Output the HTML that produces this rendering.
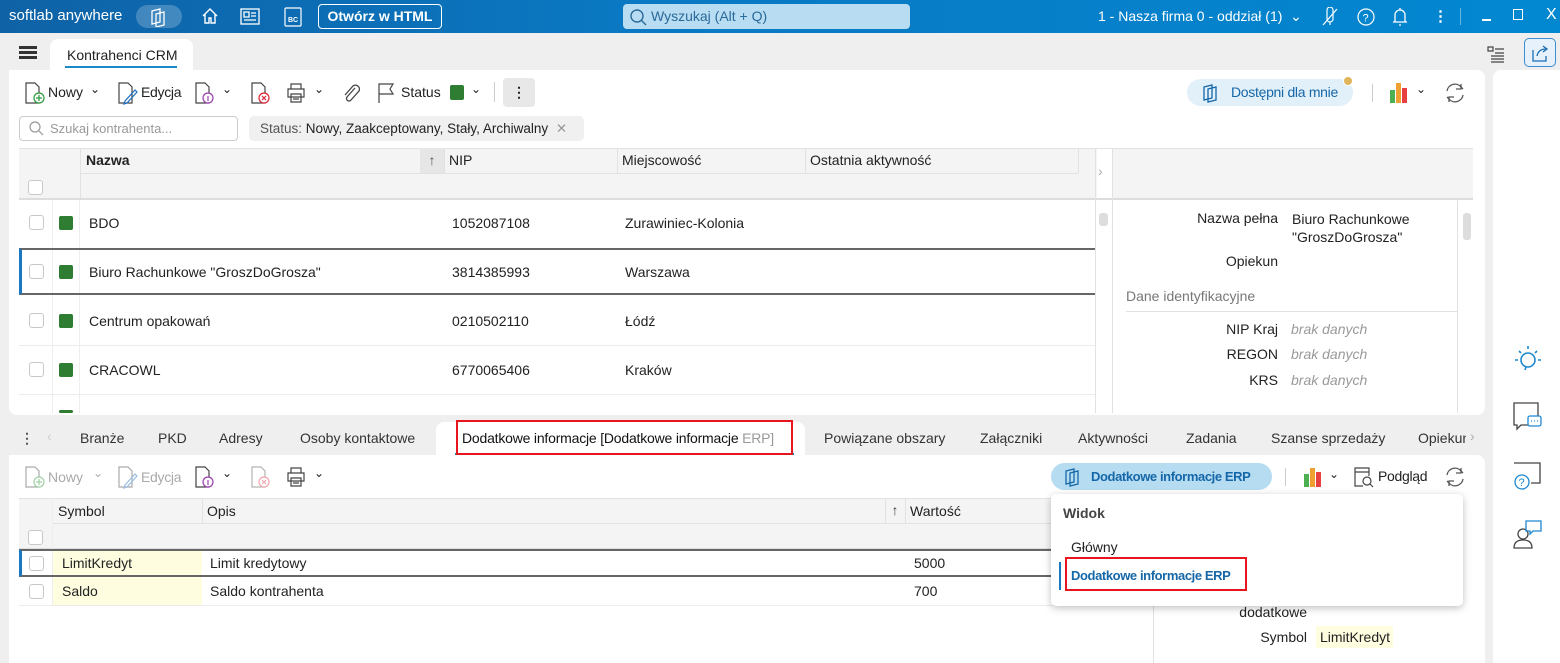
<!DOCTYPE html>
<html><head><meta charset="utf-8"><style>
*{box-sizing:border-box;margin:0;padding:0}
body{width:1560px;height:663px;overflow:hidden;background:#efefef;font-family:"Liberation Sans",sans-serif;font-size:14px;color:#222;position:relative}
.a{position:absolute}
.top{left:0;top:0;width:1560px;height:33px;background:linear-gradient(90deg,#0f62a6,#0a78c2 40%,#0288d1);color:#fff}
.top .t{position:absolute;top:7px;font-size:15px;white-space:nowrap}
.cb{position:absolute;width:15px;height:15px;border:1px solid #c8c8c8;border-radius:3px;background:#fff}
.sq{position:absolute;width:14px;height:14px;background:#2e7d32;border-radius:2px}
.txt{position:absolute;white-space:nowrap}
.hdr{background:#f4f4f4}
.vl{position:absolute;width:1px;background:#e2e2e2}
.hl{position:absolute;height:1px;background:#e2e2e2}
.lbl{position:absolute;right:0;text-align:right;white-space:nowrap}
</style></head><body>
<div class="a top">
 <div class="t" style="left:9px">softlab anywhere</div>
 <div class="a" style="left:136px;top:5px;width:46px;height:23px;border-radius:12px;background:rgba(255,255,255,.22)"></div>
 <svg class="a" style="left:148px;top:7px" width="22" height="20" fill="none" stroke="#fff" stroke-width="1.3"><path d="M4 4l8-2v13l-8 2z M8 7l8-2v13l-8 2z"/></svg>
 <svg class="a" style="left:201px;top:7px" width="18" height="18" fill="none" stroke="#fff" stroke-width="1.4"><path d="M2 9l7-7 7 7M4 7v9h4v-5h2v5h4V7"/></svg>
 <svg class="a" style="left:240px;top:8px" width="20" height="17" fill="none" stroke="#fff" stroke-width="1.3"><rect x="1" y="1" width="18" height="15"/><path d="M4 4h5v5H4zM11 5h5M11 8h5M4 12h12"/></svg>
 <svg class="a" style="left:283px;top:7px" width="20" height="20" fill="none" stroke="#fff" stroke-width="1.2"><rect x="2" y="1" width="16" height="18" rx="1"/><text x="5" y="15" font-size="7" fill="#fff" stroke="none" font-family="Liberation Sans" font-weight="bold">BC</text></svg>
 <div class="a" style="left:318px;top:4px;width:124px;height:25px;border:1.3px solid #fff;border-radius:4px;font-weight:bold;font-size:14px;text-align:center;line-height:23px">Otwórz w HTML</div>
 <div class="a" style="left:623px;top:4px;width:287px;height:25px;border-radius:4px;background:#b8dcf2;color:#2a6a9a;font-size:14px;line-height:25px;padding-left:28px">Wyszukaj (Alt + Q)</div>
 <svg class="a" style="left:629px;top:8px" width="18" height="18" fill="none" stroke="#2a6a9a" stroke-width="1.4"><circle cx="8" cy="8" r="6"/><path d="M12 12l5 5"/></svg>
 <div class="t" style="left:1098px;font-size:14px;top:8px">1 - Nasza firma 0 - oddział (1) &nbsp;⌄</div>
 <svg class="a" style="left:1320px;top:7px" width="20" height="20" fill="none" stroke="#fff" stroke-width="1.2"><path d="M7 3v9a3 3 0 006 0V3a3 3 0 00-6 0M10 15v3M3 18L17 2"/></svg>
 <svg class="a" style="left:1356px;top:7px" width="20" height="20" fill="none" stroke="#fff" stroke-width="1.2"><circle cx="10" cy="10" r="8"/><text x="6.5" y="14.5" font-size="11" fill="#fff" stroke="none" font-family="Liberation Sans">?</text></svg>
 <svg class="a" style="left:1391px;top:6px" width="18" height="22" fill="none" stroke="#fff" stroke-width="1.3"><path d="M4 16V9a5 5 0 0110 0v7h2H2h2M8 19h2M9 2v2"/></svg>
 <div class="t" style="left:1433px;font-weight:bold">⋮</div>
 <div class="a" style="left:1460px;top:8px;width:1px;height:17px;background:rgba(255,255,255,.4)"></div>
 <div class="a" style="left:1482px;top:19px;width:9px;height:1.5px;background:#fff"></div>
 <div class="a" style="left:1513px;top:9px;width:10px;height:11px;border:1.3px solid #fff"></div>
 <div class="t" style="left:1546px;top:6px;font-size:16px">X</div>
</div>
<div class="a" style="left:19px;top:46px;width:18px;height:2.5px;background:#333;box-shadow:0 5px 0 #333,0 10px 0 #333"></div>
<div class="a" style="left:50px;top:39px;width:143px;height:34px;background:#fff;border-radius:8px 8px 0 0"></div>
<div class="txt" style="left:67px;top:47px;font-size:14px">Kontrahenci CRM</div>
<div class="a" style="left:65px;top:66px;width:112px;height:2px;background:#1e88c8"></div>
<svg class="a" style="left:1486px;top:45px" width="20" height="20" fill="none" stroke="#444" stroke-width="1.2"><path d="M2 2h5v4H2zM9 4h9M9 8h9M5 11h13M5 14h13M5 17h13"/></svg>
<div class="a" style="left:1524px;top:38px;width:32px;height:29px;border:1.4px solid #3b8ed0;border-radius:5px;background:#e7f1fb"></div>
<svg class="a" style="left:1530px;top:43px" width="20" height="20" fill="none" stroke="#1a6eb5" stroke-width="1.3"><path d="M3 7v11h13v-5M7 13c1-5 4-7 9-7M13 3l4 3-4 3"/></svg>
<div class="a" style="left:9px;top:70px;width:1476px;height:345px;background:#fff;border-radius:0 8px 8px 8px"></div>
<div class="a" style="left:1493px;top:70px;width:67px;height:593px;background:#fff;border-radius:8px 0 0 0"></div>
<svg class="a" style="left:24px;top:81px" width="22" height="24" fill="none" stroke-width="1.2"><path d="M2 2h9l4 4v16H2z" stroke="#444"/><circle cx="15" cy="17" r="5" stroke="#2e9a3a" fill="#fff"/><path d="M15 14v6M12 17h6" stroke="#2e9a3a"/></svg>
<div class="txt" style="left:48px;top:84px">Nowy</div><div class="txt" style="left:90px;top:82px;font-size:12px">⌄</div>
<svg class="a" style="left:117px;top:81px" width="22" height="24" fill="none" stroke-width="1.2"><path d="M2 2h9l4 4v16H2z" stroke="#444"/><path d="M8 20l10-11 2 2-10 11-3 1z" stroke="#1e6fc0"/></svg>
<div class="txt" style="left:141px;top:84px;letter-spacing:-0.3px">Edycja</div>
<svg class="a" style="left:194px;top:81px" width="22" height="24" fill="none" stroke-width="1.2"><path d="M2 2h9l4 4v16H2z" stroke="#444"/><circle cx="14" cy="17" r="5" stroke="#9a3fb0" fill="#fff"/><path d="M14 15v5" stroke="#9a3fb0"/></svg>
<div class="txt" style="left:222px;top:82px;font-size:12px">⌄</div>
<svg class="a" style="left:250px;top:81px" width="22" height="24" fill="none" stroke-width="1.2"><path d="M2 2h9l4 4v16H2z" stroke="#444"/><circle cx="14" cy="17" r="5" stroke="#d23" fill="#fff"/><path d="M12 15l4 4M16 15l-4 4" stroke="#d23"/></svg>
<svg class="a" style="left:285px;top:82px" width="22" height="22" fill="none" stroke="#444" stroke-width="1.2"><path d="M6 7V2h10v5M3 7h16v8H3zM6 12h10v8H6zM8 15h6M8 17h6"/></svg>
<div class="txt" style="left:314px;top:82px;font-size:12px">⌄</div>
<svg class="a" style="left:341px;top:82px" width="20" height="22" fill="none" stroke="#444" stroke-width="1.3"><path d="M14 6l-8 9a2.5 2.5 0 004 3l8-9a4 4 0 00-6-5l-8 9"/></svg>
<svg class="a" style="left:376px;top:82px" width="20" height="22" fill="none" stroke="#444" stroke-width="1.2"><path d="M3 21V2h14l-3 5 3 5H3"/></svg>
<div class="txt" style="left:401px;top:84px">Status</div>
<div class="a" style="left:450px;top:85px;width:14px;height:15px;background:#2e7d32;border-radius:2px"></div>
<div class="txt" style="left:471px;top:82px;font-size:12px">⌄</div>
<div class="a" style="left:494px;top:82px;width:1px;height:20px;background:#ccc"></div>
<div class="a" style="left:503px;top:78px;width:32px;height:29px;background:#e8e8e8;border-radius:4px;text-align:center;font-weight:bold;line-height:29px">⋮</div>
<div class="a" style="left:1187px;top:79px;width:166px;height:27px;background:#e2f0fa;border-radius:14px;color:#1567a8;line-height:27px;padding-left:44px;font-size:14px;letter-spacing:-0.3px">Dostępni dla mnie</div>
<svg class="a" style="left:1200px;top:83px" width="22" height="20" fill="none" stroke="#1567a8" stroke-width="1.3"><path d="M4 4l8-2v13l-8 2zM8 6l8-2v13l-8 2z"/></svg>
<div class="a" style="left:1343px;top:76px;width:10px;height:10px;border-radius:5px;background:#e0b45a;border:1px solid #fff"></div>
<div class="a" style="left:1372px;top:84px;width:1px;height:18px;background:#ccc"></div>
<div class="a" style="left:1390px;top:90px;width:5px;height:13px;background:#4caf50"></div>
<div class="a" style="left:1396px;top:83px;width:5px;height:20px;background:#f0a030"></div>
<div class="a" style="left:1402px;top:88px;width:5px;height:15px;background:#e84040"></div>
<div class="txt" style="left:1416px;top:82px;font-size:12px">⌄</div>
<svg class="a" style="left:1444px;top:81px" width="22" height="24" fill="none" stroke="#555" stroke-width="1.3"><path d="M3 10a8 8 0 0114-4l2 2M19 14a8 8 0 01-14 4l-2-2M17 3v5h-5M5 21v-5h5"/></svg>
<div class="a" style="left:19px;top:116px;width:219px;height:25px;border:1px solid #ccc;border-radius:4px;color:#999;font-size:13px;line-height:23px;padding-left:30px">Szukaj kontrahenta...</div>
<svg class="a" style="left:29px;top:121px" width="15" height="15" fill="none" stroke="#999" stroke-width="1.2"><circle cx="6" cy="6" r="5"/><path d="M10 10l4 4"/></svg>
<div class="a" style="left:249px;top:116px;width:335px;height:25px;background:#f0f0f0;border-radius:5px;font-size:13.5px;line-height:25px;padding-left:11px;color:#222"><span style="color:#555">Status:</span> Nowy, Zaakceptowany, Stały, Archiwalny <span style="color:#999;margin-left:4px">✕</span></div>
<div class="a hdr" style="left:19px;top:148px;width:1078px;height:50px"></div>
<div class="a hdr" style="left:1112px;top:148px;width:361px;height:50px;border-left:1px solid #e2e2e2"></div>
<div class="hl" style="left:19px;top:148px;width:1454px"></div>
<div class="hl" style="left:80px;top:173px;width:998px"></div>
<div class="hl" style="left:19px;top:198px;width:1454px;background:#ddd;height:2px"></div>
<div class="vl" style="left:80px;top:148px;height:50px"></div>
<div class="a" style="left:420px;top:148px;width:24px;height:25px;background:#e6e6e6;text-align:center;line-height:24px;color:#555">↑</div>
<div class="vl" style="left:444px;top:148px;height:25px"></div>
<div class="vl" style="left:617px;top:148px;height:25px"></div>
<div class="vl" style="left:805px;top:148px;height:25px"></div>
<div class="vl" style="left:1078px;top:148px;height:25px"></div>
<div class="txt" style="left:86px;top:152px;font-weight:bold">Nazwa</div>
<div class="txt" style="left:449px;top:152px">NIP</div>
<div class="txt" style="left:622px;top:152px">Miejscowość</div>
<div class="txt" style="left:810px;top:152px">Ostatnia aktywność</div>
<div class="cb" style="left:28px;top:180px"></div>
<div class="txt" style="left:1098px;top:163px;color:#aaa">›</div>
<div class="vl" style="left:1095px;top:148px;height:265px"></div>
<div class="vl" style="left:1112px;top:148px;height:265px"></div>
<div class="vl" style="left:52px;top:200px;height:213px;background:#eee"></div>
<div class="vl" style="left:79px;top:200px;height:213px;background:#eee"></div>
<div class="hl" style="left:19px;top:345px;width:1076px;background:#ececec"></div>
<div class="hl" style="left:19px;top:394px;width:1076px;background:#ececec"></div>
<div class="a" style="left:19px;top:248px;width:1076px;height:47px;border-top:2px solid #666;border-bottom:2px solid #666;border-left:3px solid #1a78c2"></div>
<div class="cb" style="left:29px;top:215px"></div><div class="sq" style="left:59px;top:216px"></div><div class="txt" style="left:89px;top:215px">BDO</div><div class="txt" style="left:452px;top:215px">1052087108</div><div class="txt" style="left:625px;top:215px">Zurawiniec-Kolonia</div>
<div class="cb" style="left:29px;top:264px"></div><div class="sq" style="left:59px;top:265px"></div><div class="txt" style="left:89px;top:264px">Biuro Rachunkowe "GroszDoGrosza"</div><div class="txt" style="left:452px;top:264px">3814385993</div><div class="txt" style="left:625px;top:264px">Warszawa</div>
<div class="cb" style="left:29px;top:313px"></div><div class="sq" style="left:59px;top:314px"></div><div class="txt" style="left:89px;top:313px">Centrum opakowań</div><div class="txt" style="left:452px;top:313px">0210502110</div><div class="txt" style="left:625px;top:313px">Łódź</div>
<div class="cb" style="left:29px;top:362px"></div><div class="sq" style="left:59px;top:363px"></div><div class="txt" style="left:89px;top:362px">CRACOWL</div><div class="txt" style="left:452px;top:362px">6770065406</div><div class="txt" style="left:625px;top:362px">Kraków</div>
<div class="sq" style="left:59px;top:410px;height:3px"></div>
<div class="a" style="left:1099px;top:213px;width:9px;height:13px;background:#ddd;border-radius:3px"></div>
<div class="a" style="left:1112px;top:200px;width:360px;height:213px;font-size:14px">
 <div class="lbl" style="right:194px;top:10px">Nazwa pełna</div>
 <div class="txt" style="left:180px;top:10px;line-height:18px">Biuro Rachunkowe<br>"GroszDoGrosza"</div>
 <div class="lbl" style="right:194px;top:53px">Opiekun</div>
 <div class="txt" style="left:14px;top:88px;color:#777">Dane identyfikacyjne</div>
 <div class="hl" style="left:14px;top:111px;width:332px"></div>
 <div class="lbl" style="right:194px;top:121px">NIP Kraj</div><div class="txt" style="left:179px;top:121px;color:#999;font-style:italic">brak danych</div>
 <div class="lbl" style="right:194px;top:146px">REGON</div><div class="txt" style="left:179px;top:146px;color:#999;font-style:italic">brak danych</div>
 <div class="lbl" style="right:194px;top:172px">KRS</div><div class="txt" style="left:179px;top:172px;color:#999;font-style:italic">brak danych</div>
</div>
<div class="vl" style="left:1457px;top:200px;height:213px"></div>
<div class="a" style="left:1463px;top:213px;width:8px;height:27px;background:#ddd;border-radius:3px"></div>
<svg class="a" style="left:1512px;top:343px" width="32" height="32" fill="none" stroke="#1e88d0" stroke-width="1.6"><circle cx="16" cy="17" r="7"/><path d="M14 24l-1 3M16 3v3M7 8l2 2M25 8l-2 2M3 17h3M26 17h3"/></svg>
<svg class="a" style="left:1511px;top:400px" width="34" height="34" fill="none" stroke-width="1.3"><path d="M3 3h24v22H10l-4 4v-4H3z" stroke="#444"/><rect x="17" y="16" width="13" height="10" rx="2" stroke="#1e88d0" fill="#fff"/><path d="M20 21h1M23 21h1M26 21h1" stroke="#1e88d0"/></svg>
<svg class="a" style="left:1511px;top:460px" width="34" height="34" fill="none" stroke-width="1.3"><path d="M3 3h26v20H20" stroke="#444"/><circle cx="11" cy="22" r="7" stroke="#1e88d0"/><text x="7.5" y="26" font-size="11" fill="#1e88d0" stroke="none" font-family="Liberation Sans">?</text></svg>
<svg class="a" style="left:1511px;top:518px" width="34" height="34" fill="none" stroke-width="1.3"><circle cx="12" cy="16" r="5" stroke="#444"/><path d="M3 30c0-6 4-8 9-8s9 2 9 8z" stroke="#444"/><path d="M15 3h15v10h-8l-3 3v-3h-4z" stroke="#1e88d0"/></svg>
<div class="txt" style="left:20px;top:430px;font-weight:bold;color:#555">⋮</div>
<div class="txt" style="left:47px;top:428px;color:#ccc">‹</div>
<div class="a" style="left:436px;top:422px;width:369px;height:35px;background:#fff;border-radius:8px 8px 0 0"></div>
<div class="txt" style="left:80px;top:430px;color:#333">Branże</div>
<div class="txt" style="left:158px;top:430px;color:#333">PKD</div>
<div class="txt" style="left:219px;top:430px;color:#333">Adresy</div>
<div class="txt" style="left:300px;top:430px;color:#333">Osoby kontaktowe</div>
<div class="txt" style="left:462px;top:430px;color:#111;letter-spacing:-0.2px">Dodatkowe informacje [Dodatkowe informacje <span style="color:#999">ERP]</span></div>
<div class="a" style="left:455px;top:453px;width:339px;height:2px;background:#1e88c8"></div>
<div class="a" style="left:456px;top:420px;width:337px;height:35px;border:2px solid #e8141e"></div>
<div class="txt" style="left:824px;top:430px;color:#333">Powiązane obszary</div>
<div class="txt" style="left:980px;top:430px;color:#333">Załączniki</div>
<div class="txt" style="left:1078px;top:430px;color:#333">Aktywności</div>
<div class="txt" style="left:1186px;top:430px;color:#333">Zadania</div>
<div class="txt" style="left:1271px;top:430px;color:#333">Szanse sprzedaży</div>
<div class="txt" style="left:1418px;top:430px;color:#333;width:48px;overflow:hidden">Opiekun</div>
<div class="txt" style="left:1470px;top:428px;color:#aaa">›</div>
<div class="a" style="left:9px;top:455px;width:1476px;height:208px;background:#fff;border-radius:8px 8px 0 0"></div>
<div class="a" style="left:9px;top:455px;width:440px;height:20px;background:#fff"></div>
<svg class="a" style="left:24px;top:465px;opacity:.45" width="22" height="24" fill="none" stroke-width="1.2"><path d="M2 2h9l4 4v16H2z" stroke="#444"/><circle cx="15" cy="17" r="5" stroke="#2e9a3a" fill="#fff"/><path d="M15 14v6M12 17h6" stroke="#2e9a3a"/></svg>
<div class="txt" style="left:48px;top:469px;color:#aaa">Nowy</div><div class="txt" style="left:93px;top:466px;font-size:12px;color:#aaa">⌄</div>
<svg class="a" style="left:117px;top:465px;opacity:.45" width="22" height="24" fill="none" stroke-width="1.2"><path d="M2 2h9l4 4v16H2z" stroke="#444"/><path d="M8 20l10-11 2 2-10 11-3 1z" stroke="#1e6fc0"/></svg>
<div class="txt" style="left:141px;top:469px;color:#aaa;letter-spacing:-0.3px">Edycja</div>
<svg class="a" style="left:194px;top:465px" width="22" height="24" fill="none" stroke-width="1.2"><path d="M2 2h9l4 4v16H2z" stroke="#444"/><circle cx="14" cy="17" r="5" stroke="#9a3fb0" fill="#fff"/><path d="M14 15v5" stroke="#9a3fb0"/></svg>
<div class="txt" style="left:222px;top:466px;font-size:12px">⌄</div>
<svg class="a" style="left:250px;top:465px;opacity:.4" width="22" height="24" fill="none" stroke-width="1.2"><path d="M2 2h9l4 4v16H2z" stroke="#444"/><circle cx="14" cy="17" r="5" stroke="#d23" fill="#fff"/><path d="M12 15l4 4M16 15l-4 4" stroke="#d23"/></svg>
<svg class="a" style="left:285px;top:466px" width="22" height="22" fill="none" stroke="#444" stroke-width="1.2"><path d="M6 7V2h10v5M3 7h16v8H3zM6 12h10v8H6zM8 15h6M8 17h6"/></svg>
<div class="txt" style="left:314px;top:466px;font-size:12px">⌄</div>
<div class="a" style="left:1051px;top:463px;width:221px;height:27px;background:#b6dcf2;border-radius:14px;color:#1567a8;line-height:27px;padding-left:40px;font-size:13px;font-weight:bold;letter-spacing:-0.4px;white-space:nowrap">Dodatkowe informacje ERP</div>
<svg class="a" style="left:1062px;top:467px" width="22" height="20" fill="none" stroke="#1567a8" stroke-width="1.3"><path d="M4 4l8-2v13l-8 2zM8 6l8-2v13l-8 2z"/></svg>
<div class="a" style="left:1285px;top:468px;width:1px;height:18px;background:#ccc"></div>
<div class="a" style="left:1304px;top:474px;width:5px;height:13px;background:#4caf50"></div>
<div class="a" style="left:1310px;top:468px;width:5px;height:19px;background:#f0a030"></div>
<div class="a" style="left:1316px;top:472px;width:5px;height:15px;background:#e84040"></div>
<div class="txt" style="left:1329px;top:467px;font-size:12px">⌄</div>
<svg class="a" style="left:1353px;top:466px" width="22" height="22" fill="none" stroke="#444" stroke-width="1.2"><path d="M2 2h14v4H2zM2 2v18h8M16 6v4"/><circle cx="14" cy="15" r="4"/><path d="M17 18l3 3"/></svg>
<div class="txt" style="left:1378px;top:468px;letter-spacing:-0.3px">Podgląd</div>
<svg class="a" style="left:1444px;top:465px" width="22" height="24" fill="none" stroke="#555" stroke-width="1.3"><path d="M3 10a8 8 0 0114-4l2 2M19 14a8 8 0 01-14 4l-2-2M17 3v5h-5M5 21v-5h5"/></svg>
<div class="a hdr" style="left:19px;top:498px;width:1134px;height:50px"></div>
<div class="hl" style="left:19px;top:498px;width:1134px"></div>
<div class="hl" style="left:52px;top:523px;width:1100px"></div>
<div class="hl" style="left:19px;top:548px;width:1134px;background:#ddd;height:2px"></div>
<div class="vl" style="left:52px;top:498px;height:107px;background:#eee"></div>
<div class="vl" style="left:202px;top:498px;height:25px"></div>
<div class="a" style="left:885px;top:498px;width:20px;height:25px;text-align:center;line-height:24px;color:#444">↑</div>
<div class="vl" style="left:885px;top:498px;height:25px"></div>
<div class="vl" style="left:905px;top:498px;height:25px"></div>
<div class="txt" style="left:58px;top:503px">Symbol</div>
<div class="txt" style="left:207px;top:503px">Opis</div>
<div class="txt" style="left:910px;top:503px">Wartość</div>
<div class="cb" style="left:28px;top:530px"></div>
<div class="a" style="left:53px;top:550px;width:149px;height:55px;background:#fefde0"></div>
<div class="a" style="left:19px;top:549px;width:1134px;height:28px;border-top:2px solid #666;border-bottom:2px solid #666;border-left:3px solid #1a78c2"></div>
<div class="hl" style="left:19px;top:605px;width:1134px;background:#ececec"></div>
<div class="cb" style="left:29px;top:556px"></div><div class="txt" style="left:62px;top:555px">LimitKredyt</div><div class="txt" style="left:210px;top:555px">Limit kredytowy</div><div class="txt" style="left:914px;top:555px">5000</div>
<div class="cb" style="left:29px;top:584px"></div><div class="txt" style="left:62px;top:583px">Saldo</div><div class="txt" style="left:210px;top:583px">Saldo kontrahenta</div><div class="txt" style="left:914px;top:583px">700</div>
<div class="vl" style="left:1153px;top:498px;height:165px"></div>
<div class="lbl" style="left:1150px;right:auto;width:157px;top:604px">dodatkowe</div>
<div class="lbl" style="left:1150px;right:auto;width:157px;top:629px">Symbol</div>
<div class="a" style="left:1316px;top:626px;width:77px;height:22px;background:#fefde0"></div>
<div class="txt" style="left:1320px;top:629px">LimitKredyt</div>
<div class="a" style="left:1051px;top:494px;width:412px;height:112px;background:#fff;border-radius:5px;box-shadow:0 2px 8px rgba(0,0,0,.25)"></div>
<div class="txt" style="left:1063px;top:505px;font-weight:bold;color:#444">Widok</div>
<div class="txt" style="left:1071px;top:539px;color:#222">Główny</div>
<div class="a" style="left:1059px;top:562px;width:2px;height:28px;background:#1a78c2"></div>
<div class="txt" style="left:1071px;top:568px;color:#1567a8;font-weight:bold;font-size:13px;letter-spacing:-0.4px">Dodatkowe informacje ERP</div>
<div class="a" style="left:1065px;top:557px;width:182px;height:34px;border:2px solid #e8141e"></div>
</body></html>
